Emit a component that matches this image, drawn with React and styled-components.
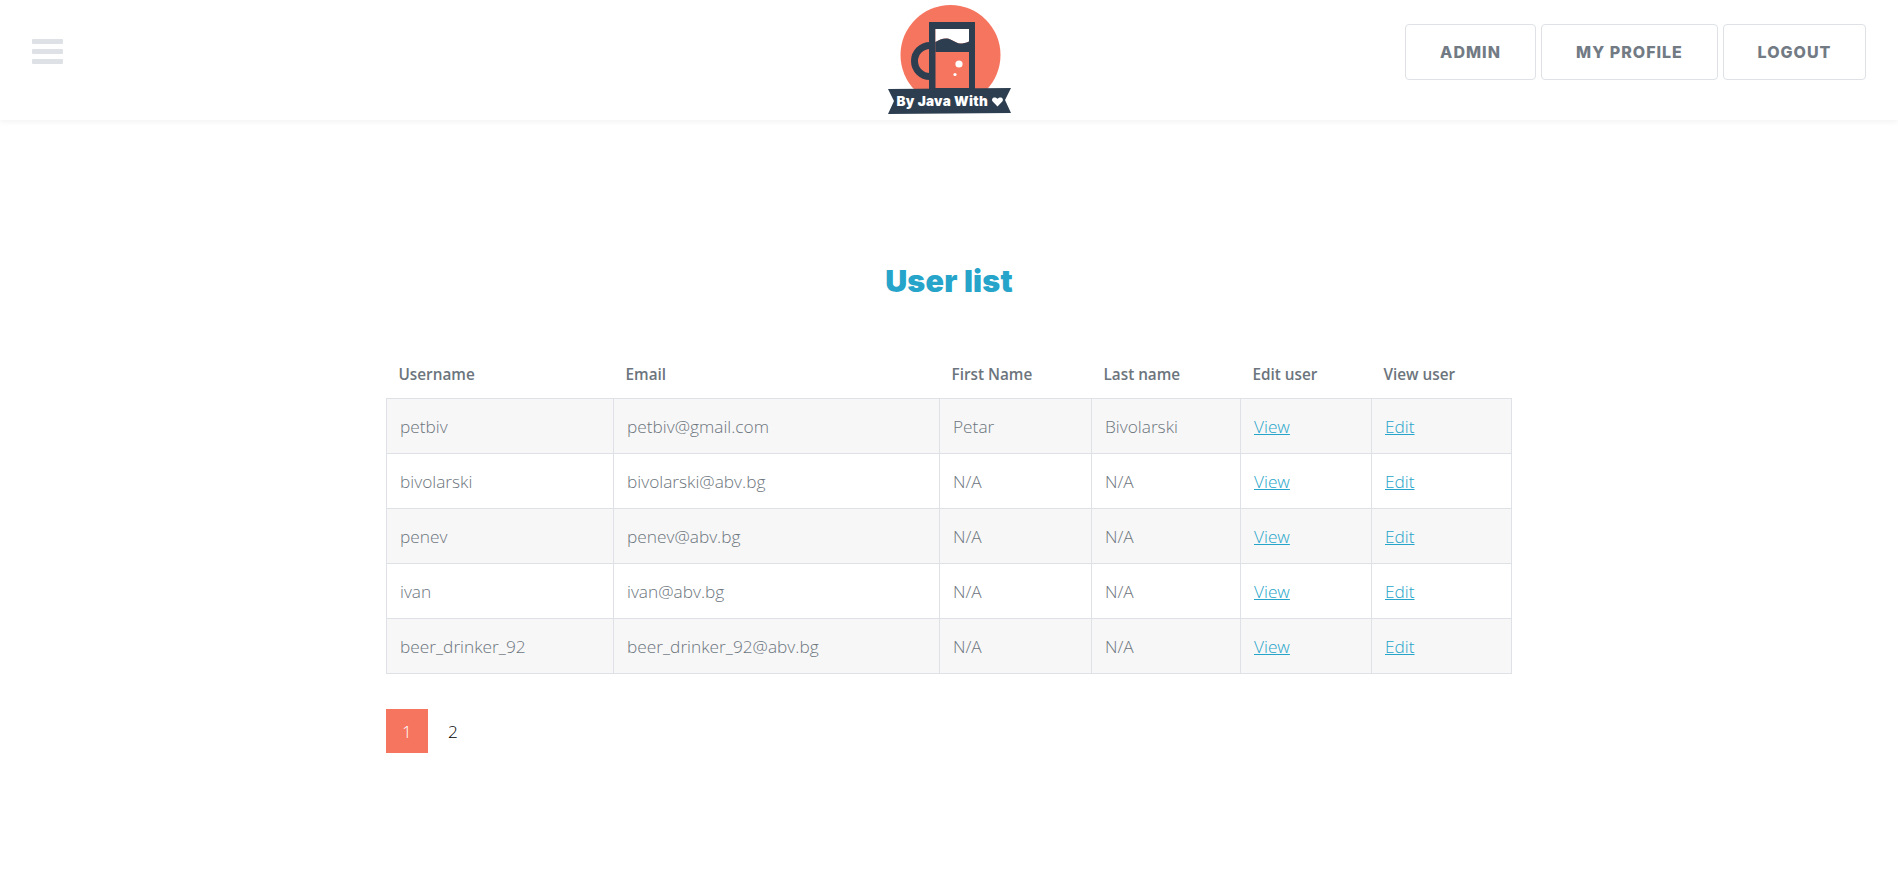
import React from 'react';
import styled, { createGlobalStyle } from 'styled-components';

const GlobalStyle = createGlobalStyle`
  html, body {
    margin: 0;
    padding: 0;
    background: #ffffff;
    font-family: "Open Sans", "Liberation Sans", sans-serif;
  }
`;

const Header = styled.header`
  display: grid;
  grid-template-columns: 1fr auto 1fr;
  align-items: start;
  height: 120px;
  padding: 0 32px;
  box-sizing: border-box;
  background: #ffffff;
  box-shadow: 0 2px 6px rgba(0, 0, 0, 0.05);
`;

const Burger = styled.div`
  display: flex;
  flex-direction: column;
  gap: 5px;
  width: 31px;
  margin-top: 39px;
`;

const BurgerBar = styled.span`
  display: block;
  height: 5px;
  border-radius: 1px;
  background: #dee2e6;
`;

const Logo = styled.svg`
  display: block;
  width: 128px;
  height: 120px;
`;

const Nav = styled.nav`
  display: flex;
  justify-content: flex-end;
  gap: 5px;
  margin-top: 24px;
`;

const NavButton = styled.a`
  display: flex;
  align-items: center;
  justify-content: center;
  box-sizing: border-box;
  width: ${(p) => p.$width}px;
  height: 56px;
  border: 1px solid #dee2e6;
  border-radius: 4px;
  color: #727b84;
  font-family: Inter, "Liberation Sans", sans-serif;
  font-size: 16px;
  font-weight: 800;
  letter-spacing: 1px;
  text-transform: uppercase;
`;

const Main = styled.main`
  width: 1126px;
  margin: 0 auto;
`;

const Title = styled.h1`
  margin: 142px 0 0;
  text-align: center;
  color: #26a4c9;
  font-family: Inter, "Liberation Sans", sans-serif;
  font-size: 30.5px;
  font-weight: 900;
  letter-spacing: 0.2px;
  line-height: 38px;
`;

const Table = styled.table`
  width: 1125px;
  margin-top: 50px;
  border-collapse: collapse;
  table-layout: fixed;
  color: #6c757d;
`;

const HeadCell = styled.th`
  height: 48px;
  padding: 0 12px;
  box-sizing: border-box;
  text-align: left;
  vertical-align: middle;
  font-size: 15.3px;
  font-weight: 600;
`;

const Row = styled.tr`
  background: ${(p) => (p.$shaded ? '#f7f7f7' : '#ffffff')};
`;

const Cell = styled.td`
  height: 55px;
  padding: 1px 13px 0;
  box-sizing: border-box;
  border: 1px solid #dee2e6;
  font-size: 17.3px;
  font-weight: 300;
`;

const RowLink = styled.a`
  color: #26a4c9;
  text-decoration: underline;
`;

const Pagination = styled.div`
  display: flex;
  margin-top: 35px;
`;

const PageItem = styled.span`
  display: flex;
  align-items: center;
  justify-content: center;
  width: ${(p) => (p.$active ? '42px' : '50px')};
  height: 44px;
  padding-top: 1px;
  box-sizing: border-box;
  background: ${(p) => (p.$active ? '#f6755f' : 'transparent')};
  color: ${(p) => (p.$active ? '#ffffff' : '#000000')};
  font-size: 17.3px;
  font-weight: 300;
`;

const columns = [
  { label: 'Username', width: 227 },
  { label: 'Email', width: 326 },
  { label: 'First Name', width: 152 },
  { label: 'Last name', width: 149 },
  { label: 'Edit user', width: 131 },
  { label: 'View user', width: 140 },
];

const users = [
  ['petbiv', 'petbiv@gmail.com', 'Petar', 'Bivolarski'],
  ['bivolarski', 'bivolarski@abv.bg', 'N/A', 'N/A'],
  ['penev', 'penev@abv.bg', 'N/A', 'N/A'],
  ['ivan', 'ivan@abv.bg', 'N/A', 'N/A'],
  ['beer_drinker_92', 'beer_drinker_92@abv.bg', 'N/A', 'N/A'],
];

const BrandLogo = () => (
  <Logo viewBox="0 0 128 120">
    <circle cx="65.5" cy="55" r="50" fill="#f6755f" />
    <path
      d="M45 45.5 A15.5 15.5 0 0 0 45 76.5"
      fill="none"
      stroke="#2c3e50"
      strokeWidth="7"
    />
    <rect x="44" y="22" width="46" height="68" fill="#2c3e50" />
    <rect x="50.5" y="29" width="33.5" height="59" fill="#f6755f" />
    <path
      d="M50.5 29 H84 V41.5 C81 43 78 43.5 75 43.5 C70 43 67 39 62 38.5 C58 38 54 40 50.5 42 Z"
      fill="#ffffff"
    />
    <path
      d="M50.5 42 C54 40 58 38 62 38.5 C67 39 70 43 75 43.5 C78 43.5 81 43 84 41.5 V52 H50.5 Z"
      fill="#2c3e50"
    />
    <circle cx="74" cy="64" r="3.6" fill="#ffffff" />
    <circle cx="70" cy="74.5" r="1.6" fill="#ffffff" />
    <path
      d="M3 89 L126 88 L120 100 L126 113 L3 114 L9 101 Z"
      fill="#2c3e50"
    />
    <text
      x="11.5"
      y="105.5"
      fill="#ffffff"
      fontFamily="Inter, sans-serif"
      fontSize="13.5"
      fontWeight="900"
      letterSpacing="0.3"
    >
      By Java With
    </text>
    <path
      d="M112.5 106.5 L107.7 101.5 C105.5 98.8 109.3 95.5 112.5 98.8 C115.7 95.5 119.5 98.8 117.3 101.5 Z"
      fill="#ffffff"
    />
  </Logo>
);

const App = () => {
  return (
    <>
      <GlobalStyle />
      <Header>
        <Burger>
          <BurgerBar />
          <BurgerBar />
          <BurgerBar />
        </Burger>
        <BrandLogo />
        <Nav>
          <NavButton $width={131}>Admin</NavButton>
          <NavButton $width={177}>My Profile</NavButton>
          <NavButton $width={143}>Logout</NavButton>
        </Nav>
      </Header>
      <Main>
        <Title>User list</Title>
        <Table>
          <colgroup>
            {columns.map((col) => (
              <col key={col.label} width={col.width} />
            ))}
          </colgroup>
          <thead>
            <tr>
              {columns.map((col) => (
                <HeadCell key={col.label}>{col.label}</HeadCell>
              ))}
            </tr>
          </thead>
          <tbody>
            {users.map((user, i) => (
              <Row key={user[0]} $shaded={i % 2 === 0}>
                {user.map((value, j) => (
                  <Cell key={j}>{value}</Cell>
                ))}
                <Cell>
                  <RowLink>View</RowLink>
                </Cell>
                <Cell>
                  <RowLink>Edit</RowLink>
                </Cell>
              </Row>
            ))}
          </tbody>
        </Table>
        <Pagination>
          <PageItem $active>1</PageItem>
          <PageItem>2</PageItem>
        </Pagination>
      </Main>
    </>
  );
};

export default App;
